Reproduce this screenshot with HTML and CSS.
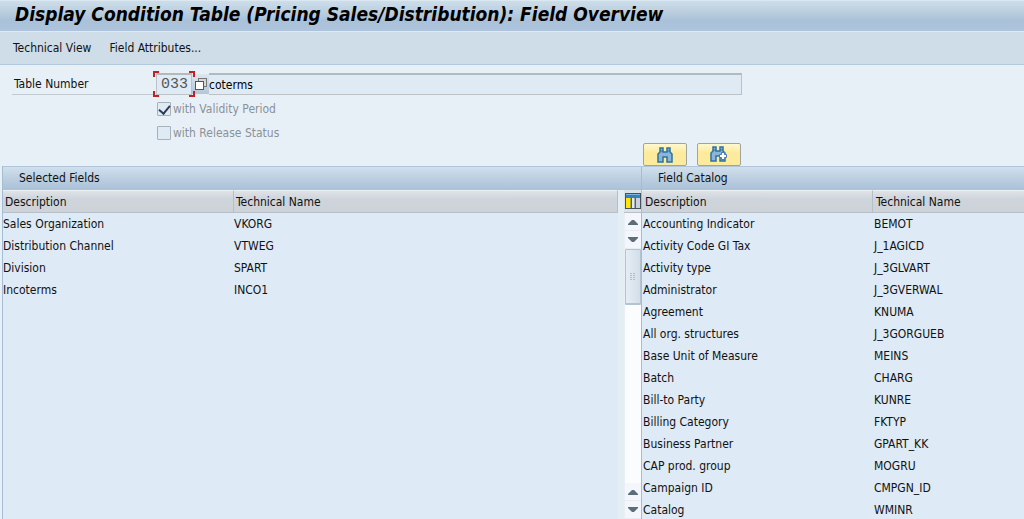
FILE: index.html
```
<!DOCTYPE html>
<html lang="en">
<head>
    <meta charset="UTF-8">
    <meta name="viewport" content="width=device-width, initial-scale=1.0">
    <title>Display Condition Table</title>
    <link rel="stylesheet" href="styles.css">
</head>
<body>
<header class="title-bar">
    <h1>Display Condition Table (Pricing Sales/Distribution): Field Overview</h1>
</header>
<nav class="toolbar">
    <button type="button">Technical View</button>
    <button type="button">Field Attributes...</button>
</nav>
<form class="form">
    <div class="form-row">
        <label class="form-label" for="tableNumber">Table Number</label>
        <div class="focus-frame">
            <input type="text" class="number-input" id="tableNumber" value="033" readonly>
        </div>
        <button type="button" class="match-btn" aria-label="Value help">
            <svg width="14" height="14" viewBox="0 0 14 14">
                <rect x="4.500" y="1.500" width="8" height="8" fill="#d5d8da" stroke="#777"/>
                <rect x="1.500" y="4.500" width="8" height="8" fill="#fff" stroke="#555"/>
            </svg>
        </button>
        <input type="text" class="text-input" aria-label="Table description" value="coterms" readonly>
    </div>
    <div class="check-row">
        <input type="checkbox" id="validity" checked disabled>
        <label for="validity">with Validity Period</label>
    </div>
    <div class="check-row">
        <input type="checkbox" id="release" disabled>
        <label for="release">with Release Status</label>
    </div>
</form>
<main class="panels">
    <section class="panel selected">
        <h2>Selected Fields</h2>
        <div class="panel-body">
            <div class="table-area">
                <table>
                    <thead>
                        <tr><th class="desc">Description</th><th>Technical Name</th></tr>
                    </thead>
                    <tbody>
                        <tr><td>Sales Organization</td><td>VKORG</td></tr>
                        <tr><td>Distribution Channel</td><td>VTWEG</td></tr>
                        <tr><td>Division</td><td>SPART</td></tr>
                        <tr><td>Incoterms</td><td>INCO1</td></tr>
                    </tbody>
                </table>
            </div>
            <div class="side">
                <button type="button" class="config-btn" aria-label="Configure columns">
                    <svg width="16" height="16" viewBox="0 0 16 16">
                        <rect width="16" height="16" fill="#45525e"/>
                        <rect x="1" y="1" width="14" height="4" fill="#2f86c6"/>
                        <path d="M1 1h14v1H1z" fill="#79b8e2"/>
                        <rect x="1" y="5" width="5" height="10" fill="#ffe600"/>
                        <rect x="7" y="5" width="3" height="10" fill="#e4e9ee"/>
                        <rect x="11" y="5" width="4" height="10" fill="#c9d2da"/>
                        <path d="M6 2v13M10 2v13" stroke="#5c6c7a"/>
                    </svg>
                </button>
                <div class="scrollbar">
                    <button type="button" class="arrow" aria-label="Up"><svg width="10" height="6" viewBox="0 0 10 6"><path d="M0 5 4 1h2l4 4v1H0z" fill="#5d6d79"/></svg></button>
                    <button type="button" class="arrow" aria-label="Down"><svg width="10" height="6" viewBox="0 0 10 6"><path d="M0 1 4 5h2l4-4V0H0z" fill="#5d6d79"/></svg></button>
                    <div class="track">
                        <div class="thumb">
                            <svg width="6" height="8" viewBox="0 0 6 8"><path d="M1 0v8M4 0v8" stroke="#aebdca" stroke-width="2" stroke-dasharray="1 1"/></svg>
                        </div>
                    </div>
                    <button type="button" class="arrow" aria-label="Page up"><svg width="10" height="6" viewBox="0 0 10 6"><path d="M0 5 4 1h2l4 4v1H0z" fill="#5d6d79"/></svg></button>
                    <button type="button" class="arrow" aria-label="Page down"><svg width="10" height="6" viewBox="0 0 10 6"><path d="M0 1 4 5h2l4-4V0H0z" fill="#5d6d79"/></svg></button>
                </div>
            </div>
        </div>
    </section>
    <div class="catalog">
        <div class="find-buttons">
            <button type="button" class="find-btn" aria-label="Find">
                <svg width="16" height="16" viewBox="0 0 16 16">
                    <path d="M3 1h3v4h4V1h3v4l2 2v8h-5v-5H6v5H1V7l2-2z" fill="#8db4dc" stroke="#2b739f" stroke-width="1.500"/>
                    <path d="M3 4h3M10 4h3" stroke="#2b739f"/>
                </svg>
            </button>
            <button type="button" class="find-btn" aria-label="Find next">
                <svg width="18" height="17" viewBox="0 0 18 17">
                    <path d="M3 1h3v4h4V1h3v4l2 2v8h-5v-5H6v5H1V7l2-2z" fill="#8db4dc" stroke="#2b739f" stroke-width="1.500"/>
                    <path d="M3 4h3M10 4h3" stroke="#2b739f"/>
                    <path d="M11.500 6.500h3v2h2v3h-2v2h-3v-2h-2v-3h2z" fill="#fff" stroke="#4a76b4"/>
                </svg>
            </button>
        </div>
        <section class="panel">
            <h2>Field Catalog</h2>
            <div class="panel-body">
                <div class="table-area">
                    <table>
                        <thead>
                            <tr><th class="desc">Description</th><th>Technical Name</th></tr>
                        </thead>
                        <tbody>
                            <tr><td>Accounting Indicator</td><td>BEMOT</td></tr>
                            <tr><td>Activity Code GI Tax</td><td>J_1AGICD</td></tr>
                            <tr><td>Activity type</td><td>J_3GLVART</td></tr>
                            <tr><td>Administrator</td><td>J_3GVERWAL</td></tr>
                            <tr><td>Agreement</td><td>KNUMA</td></tr>
                            <tr><td>All org. structures</td><td>J_3GORGUEB</td></tr>
                            <tr><td>Base Unit of Measure</td><td>MEINS</td></tr>
                            <tr><td>Batch</td><td>CHARG</td></tr>
                            <tr><td>Bill-to Party</td><td>KUNRE</td></tr>
                            <tr><td>Billing Category</td><td>FKTYP</td></tr>
                            <tr><td>Business Partner</td><td>GPART_KK</td></tr>
                            <tr><td>CAP prod. group</td><td>MOGRU</td></tr>
                            <tr><td>Campaign ID</td><td>CMPGN_ID</td></tr>
                            <tr><td>Catalog</td><td>WMINR</td></tr>
                        </tbody>
                    </table>
                </div>
            </div>
        </section>
    </div>
</main>
</body>
</html>
```
FILE: styles.css
```
* {
    box-sizing: border-box;
}
body {
    height: 100vh;
    margin: 0;
    display: flex;
    flex-direction: column;
    overflow: hidden;
    background-color: #e8f0f7;
    color: #111;
    font-family: "DejaVu Sans Condensed", Tahoma, "Noto Sans", sans-serif;
    font-size: 12px;
}
button, input {
    font: inherit;
    color: inherit;
    margin: 0;
    padding: 0;
}
.title-bar {
    flex: none;
    height: 31px;
    padding: 0 15px;
    border-top: 1px solid #dce8f1;
    background: linear-gradient(#cddeea, #bccfdf 35%, #a9c1d9 65%, #adc4dc);
}
h1 {
    margin: 0;
    font-size: 19px;
    font-style: italic;
    line-height: 26px;
    white-space: nowrap;
    color: #000;
}
.toolbar {
    flex: none;
    display: flex;
    gap: 18px;
    height: 34px;
    padding: 0 13px;
    background-color: #cfdde8;
    border-top: 1px solid #dfe9f1;
    border-bottom: 1px solid #b2c8dc;
}
.toolbar button {
    border: none;
    background: none;
}
.form {
    flex: none;
    height: 78px;
    padding: 5px 12px 0;
}
.form-row {
    display: flex;
    align-items: center;
    width: 730px;
    max-width: 100%;
    height: 26px;
    margin-top: 1px;
}
.form-label {
    width: 141px;
    height: 22px;
    padding-left: 2px;
    line-height: 22px;
    border-bottom: 1px solid #c3cbd1;
}
/* red corners around the focused field */
.focus-frame {
    --red: linear-gradient(#c02026, #c02026);
    position: relative;
    padding: 2px 3px;
    background:
        var(--red) 0 0 / 6px 2px, var(--red) 0 0 / 2px 6px,
        var(--red) 100% 0 / 6px 2px, var(--red) 100% 0 / 2px 6px,
        var(--red) 0 100% / 6px 2px, var(--red) 0 100% / 2px 6px,
        var(--red) 100% 100% / 6px 2px, var(--red) 100% 100% / 2px 6px;
    background-repeat: no-repeat;
}
.number-input, .text-input {
    display: block;
    height: 22px;
    border: 1px solid #bcc2c6;
    border-top: 2px solid #b3babf;
    background-color: #deebf5;
    outline: none;
}
.number-input {
    width: 36px;
    padding-left: 4px;
    font-family: "Liberation Mono", monospace;
    font-size: 15px;
    color: #555;
}
.match-btn {
    display: flex;
    align-items: center;
    justify-content: center;
    width: 17px;
    height: 20px;
    margin-left: -3px;
    border: none;
    background: linear-gradient(#dce6ee, #b4c6d8);
}
.text-input {
    flex: 1;
    border-left: none;
    color: #000;
}
.check-row {
    display: flex;
    align-items: center;
    gap: 2px;
    height: 24px;
    margin-left: 145px;
    line-height: 20px;
    color: #8b9198;
}
.check-row input {
    appearance: none;
    display: grid;
    place-items: center;
    width: 14px;
    height: 14px;
    border: 1px solid #a9b1b8;
    border-radius: 1px;
    background-color: #deebf5;
}
.check-row input:checked::before {
    content: "";
    width: 5px;
    height: 9px;
    margin-bottom: 2px;
    border: solid #2c3a55;
    border-width: 0 2px 2px 0;
    transform: rotate(40deg);
}
.panels {
    flex: 1;
    min-height: 0;
    display: grid;
    grid-template-columns: 640fr 382fr;
    padding-left: 2px;
}
.selected {
    margin-top: 23px;
}
.catalog {
    display: flex;
    flex-direction: column;
    min-height: 0;
}
.find-buttons {
    display: flex;
    gap: 10px;
    height: 23px;
    padding-left: 1px;
}
.find-btn {
    display: flex;
    align-items: center;
    justify-content: center;
    width: 44px;
    border: 1px solid #a0a3a0;
    border-radius: 2px;
    background: linear-gradient(#fff8d0, #fdeb9d 40%, #fdeb9d);
}
.panel {
    flex: 1;
    min-height: 0;
    display: flex;
    flex-direction: column;
    border-left: 1px solid #a5bdd3;
}
.catalog .panel {
    border-left: none;
}
.panel h2 {
    flex: none;
    height: 24px;
    margin: 0;
    padding-left: 16px;
    border-top: 1px solid #b1c6da;
    border-right: 1px solid #a5bdd3;
    font-size: 12px;
    font-weight: normal;
    line-height: 22px;
    background: linear-gradient(#d0e0ed, #bccfe0 50%, #a9c1d9);
}
.catalog h2 {
    border-right: none;
}
.panel-body {
    flex: 1;
    min-height: 0;
    display: flex;
    background-color: #e4edf4;
}
.table-area {
    flex: 1;
    overflow: hidden;
    background-color: #deeaf5;
}
table {
    width: 100%;
    table-layout: fixed;
    border-collapse: separate;
    border-spacing: 0;
}
th {
    height: 23px;
    padding: 0 2px;
    font-weight: normal;
    text-align: left;
    background: linear-gradient(#dfe3e6, #ced4db 40%, #ced3da);
    border-top: 1px solid #edf0f2;
    border-bottom: 1px solid #b6bec7;
    border-right: 1px solid #b6bec7;
}
.desc {
    width: 231px;
}
td {
    height: 22px;
    padding: 0;
    white-space: nowrap;
}
.catalog td {
    padding-left: 1px;
}
.catalog th {
    padding-left: 3px;
}
.catalog th:last-child {
    border-right: none;
}
.side {
    display: flex;
    flex-direction: column;
    width: 24px;
    padding-left: 6px;
    border-right: 1px solid #a5bdd3;
}
.config-btn {
    display: flex;
    align-items: center;
    justify-content: center;
    height: 23px;
    border: none;
    border-bottom: 1px solid #b6bec7;
    background-color: #dde2e6;
}
.scrollbar {
    flex: 1;
    display: flex;
    flex-direction: column;
    padding-left: 1px;
    background-color: #e9eff4;
}
.arrow {
    display: flex;
    align-items: center;
    justify-content: center;
    height: 18px;
    border: none;
    border-bottom: 1px solid #e6edf3;
    background-color: #f3f6fa;
}
.track {
    flex: 1;
    background-color: #fafcfe;
}
.thumb {
    display: flex;
    align-items: center;
    justify-content: center;
    height: 56px;
    border: 1px solid #b5c3d0;
    border-bottom-width: 2px;
    border-radius: 1px;
    background: linear-gradient(90deg, #e6edf4, #d3dee9);
}
```
